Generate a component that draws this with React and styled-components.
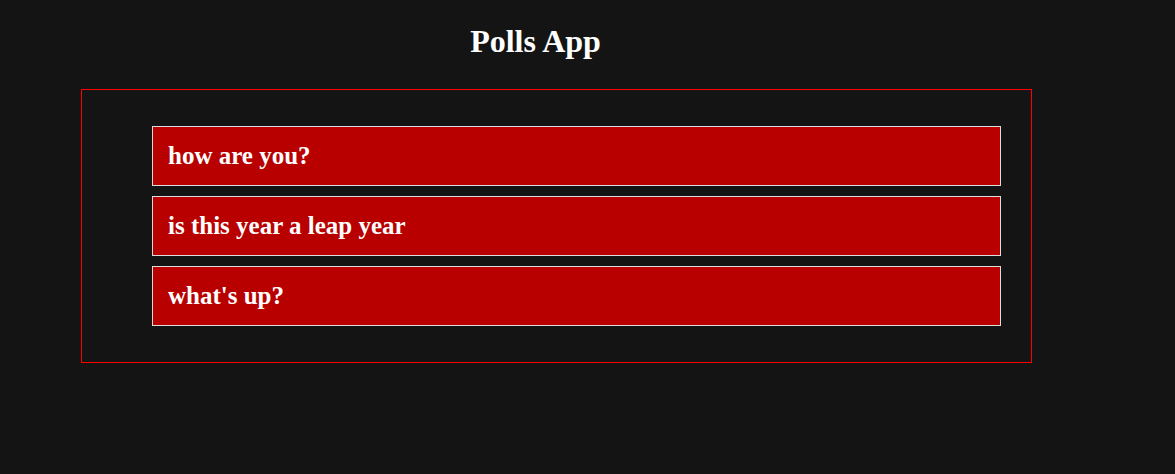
import React from 'react';
import styled, { createGlobalStyle } from 'styled-components';

const GlobalStyle = createGlobalStyle`
  body {
    margin: 0;
    background: #141414;
    font-family: "Liberation Serif", "Times New Roman", serif;
  }
`;

const Page = styled.div`
  min-height: 474px;
  padding: 0 0 0 81px;
  background: #141414;
  color: #fff;
`;

const Wrap = styled.div`
  width: 951px;
`;

const Title = styled.h1`
  margin: 0;
  padding: 23px 42px 0 0;
  height: 89px;
  box-sizing: border-box;
  text-align: center;
  font-size: 32px;
  line-height: 36px;
  font-weight: bold;
  color: #fff;
`;

const Panel = styled.div`
  box-sizing: border-box;
  border: 1px solid #ff0000;
  padding: 36px 30px 36px 70px;
  display: flex;
  flex-direction: column;
  gap: 10px;
`;

const Poll = styled.div`
  box-sizing: border-box;
  height: 60px;
  display: flex;
  align-items: center;
  padding: 0 15px;
  background: #b80000;
  border: 1px solid #dcdcdc;
  color: #fff;
  font-size: 25px;
  font-weight: bold;
`;

const polls = ['how are you?', 'is this year a leap year', "what's up?"];

export default function App() {
  return (
    <>
      <GlobalStyle />
      <Page>
        <Wrap>
          <Title>Polls App</Title>
          <Panel>
            {polls.map((q) => (
              <Poll key={q}>{q}</Poll>
            ))}
          </Panel>
        </Wrap>
      </Page>
    </>
  );
}
